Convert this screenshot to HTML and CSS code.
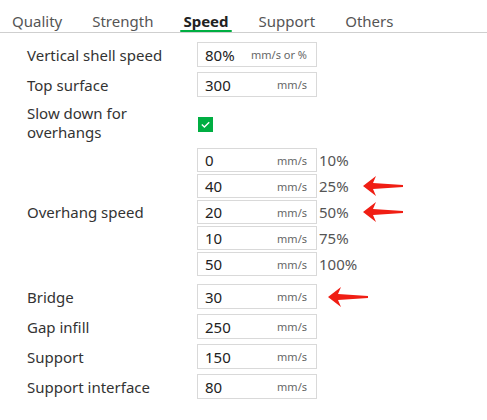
FILE: index.html
```html
<!DOCTYPE html>
<html>
<head>
<meta charset="utf-8">
<link rel="stylesheet" href="styles.css">
</head>
<body>
<div class="tabs">
  <div class="tab">Quality</div>
  <div class="tab">Strength</div>
  <div class="tab active">Speed</div>
  <div class="tab">Support</div>
  <div class="tab">Others</div>
</div>
<div class="content">
  <div class="row">
    <div class="label">Vertical shell speed</div>
    <div class="field"><span class="val">80%</span><span class="unit">mm/s or %</span></div>
  </div>
  <div class="row">
    <div class="label">Top surface</div>
    <div class="field"><span class="val">300</span><span class="unit">mm/s</span></div>
  </div>
  <div class="row tall">
    <div class="label two">Slow down for<br>overhangs</div>
    <div class="check"><svg width="15" height="15" viewBox="0 0 15 15"><rect width="15" height="15" fill="#00ae42"/><path d="M3.8 7.6 L6.4 10 L11.2 5.2" fill="none" stroke="#fff" stroke-width="1.4"/></svg></div>
  </div>
  <div class="row group">
    <div class="label">Overhang speed</div>
    <div class="stack">
      <div class="sub"><div class="field small"><span class="val">0</span><span class="unit">mm/s</span></div><span class="pct">10%</span></div>
      <div class="sub"><div class="field small"><span class="val">40</span><span class="unit">mm/s</span></div><span class="pct">25%</span><svg class="arrow" width="40" height="20" viewBox="0 0 40 20"><path d="M0 10 L13 0 L10 7 L40 9 L40 11 L10 13 L13 20 Z" fill="#f01e14"/></svg></div>
      <div class="sub"><div class="field small"><span class="val">20</span><span class="unit">mm/s</span></div><span class="pct">50%</span><svg class="arrow" width="40" height="20" viewBox="0 0 40 20"><path d="M0 10 L13 0 L10 7 L40 9 L40 11 L10 13 L13 20 Z" fill="#f01e14"/></svg></div>
      <div class="sub"><div class="field small"><span class="val">10</span><span class="unit">mm/s</span></div><span class="pct">75%</span></div>
      <div class="sub"><div class="field small"><span class="val">50</span><span class="unit">mm/s</span></div><span class="pct">100%</span></div>
    </div>
  </div>
  <div class="row bridge-row">
    <div class="label">Bridge</div>
    <div class="field"><span class="val">30</span><span class="unit">mm/s</span></div>
    <svg class="arrow bridge" width="40" height="20" viewBox="0 0 40 20"><path d="M0 10 L13 0 L10 7 L40 9 L40 11 L10 13 L13 20 Z" fill="#f01e14"/></svg>
  </div>
  <div class="row">
    <div class="label">Gap infill</div>
    <div class="field"><span class="val">250</span><span class="unit">mm/s</span></div>
  </div>
  <div class="row">
    <div class="label">Support</div>
    <div class="field"><span class="val">150</span><span class="unit">mm/s</span></div>
  </div>
  <div class="row">
    <div class="label">Support interface</div>
    <div class="field"><span class="val">80</span><span class="unit">mm/s</span></div>
  </div>
</div>
</body>
</html>
```
FILE: styles.css
```css
html, body {
  margin: 0;
  padding: 0;
  background: #fff;
  font-family: "Noto Sans", "Liberation Sans", sans-serif;
  color: #333;
}
.tabs {
  display: flex;
  gap: 30px;
  padding: 10px 0 0 12px;
  height: 33px;
  box-sizing: border-box;
  border-bottom: 1px solid #cfcfcf;
  align-items: stretch;
}
.tab {
  position: relative;
  font-size: 15px;
  color: #555;
  line-height: 22px;
}
.tab.active {
  font-weight: bold;
  color: #222;
}
.tab.active::after {
  content: "";
  position: absolute;
  left: -3px;
  right: -3px;
  bottom: 0;
  height: 2px;
  background: #00ae42;
  border-radius: 1px;
}
.content {
  padding: 9px 0 0 27px;
  display: flex;
  flex-direction: column;
  gap: 5px;
}
.row {
  display: flex;
  align-items: center;
}
.label {
  width: 170px;
  font-size: 15px;
  line-height: 18px;
  color: #333;
}
.label.two {
  line-height: 19px;
}
.field {
  width: 120px;
  height: 25px;
  box-sizing: border-box;
  border: 1px solid #d9d9d9;
  display: flex;
  align-items: center;
  justify-content: space-between;
  padding: 0 9px 0 7px;
}
.field.small {
  height: 24px;
}
.val {
  font-size: 15px;
  color: #222;
}
.unit {
  font-size: 11px;
  color: #666;
}
.row.tall {
  height: 40px;
  margin-top: 1px;
}
.check {
  display: flex;
  margin-left: 1px;
  margin-top: 2px;
}
.stack {
  display: flex;
  flex-direction: column;
  gap: 2px;
}
.sub {
  display: flex;
  align-items: center;
}
.pct {
  width: 44px;
  margin-left: 2px;
  font-size: 15px;
  color: #555;
}
.arrow {
  display: block;
}
.row.bridge-row {
  margin-top: 3px;
}
.arrow.bridge {
  margin-left: 11px;
  margin-top: 1px;
}
```
